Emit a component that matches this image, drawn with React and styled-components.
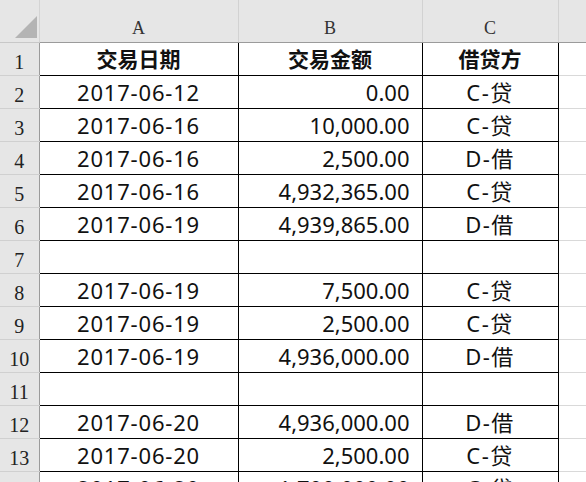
import React from "react";
import styled, { createGlobalStyle } from "styled-components";

const GlobalStyle = createGlobalStyle`
  html, body {
    margin: 0;
    padding: 0;
    background: #ffffff;
    overflow: hidden;
  }
`;

const COLS = ["A", "B", "C"];

const rows = [
  { head: true, a: "交易日期", b: "交易金额", c: "借贷方" },
  { a: "2017-06-12", b: "0.00", c: "C-贷" },
  { a: "2017-06-16", b: "10,000.00", c: "C-贷" },
  { a: "2017-06-16", b: "2,500.00", c: "D-借" },
  { a: "2017-06-16", b: "4,932,365.00", c: "C-贷" },
  { a: "2017-06-19", b: "4,939,865.00", c: "D-借" },
  { a: "", b: "", c: "" },
  { a: "2017-06-19", b: "7,500.00", c: "C-贷" },
  { a: "2017-06-19", b: "2,500.00", c: "C-贷" },
  { a: "2017-06-19", b: "4,936,000.00", c: "D-借" },
  { a: "", b: "", c: "" },
  { a: "2017-06-20", b: "4,936,000.00", c: "D-借" },
  { a: "2017-06-20", b: "2,500.00", c: "C-贷" },
  { a: "2017-06-20", b: "1,700,000.00", c: "C-贷" },
];

const Sheet = styled.table`
  border-collapse: collapse;
  table-layout: fixed;
  width: 660px;
  font-family: "Noto Sans", "Noto Sans CJK SC", sans-serif;
  color: #111;
`;

const HeadRow = styled.tr`
  height: 42px;
  background: #e6e6e6;
`;

const Corner = styled.th`
  padding: 0;
  border-right: 1px solid #d4d4d4;
  border-bottom: 1px solid #c8c8c8;
  vertical-align: bottom;
`;

const CornerBox = styled.div`
  display: flex;
  justify-content: flex-end;
  padding: 0 2px 4px 0;
`;

const Triangle = styled.div`
  width: 0;
  height: 0;
  border-left: 22px solid transparent;
  border-bottom: 22px solid #b4b4b4;
`;

const ColLetter = styled.th`
  padding: 0 0 3px;
  font-family: "Liberation Serif", serif;
  font-weight: normal;
  font-size: 18px;
  color: #333;
  text-align: center;
  vertical-align: bottom;
  border-left: 1px solid #d2d2d2;
  border-right: 1px solid #d2d2d2;
  border-bottom: 1px solid #9b9b9b;
`;

const Row = styled.tr`
  height: 33px;
`;

const RowNum = styled.th`
  padding: 0 0 1px;
  background: #e6e6e6;
  font-family: "Liberation Serif", serif;
  font-weight: normal;
  font-size: 20px;
  color: #222;
  text-align: center;
  vertical-align: bottom;
  border-bottom: 1px solid #d0d0d0;
  border-right: 1px solid #9b9b9b;
`;

const Cell = styled.td`
  padding: 0 ${(p) => (p.$align === "right" ? "12px" : "0")} 0 0;
  border: 1px solid #000;
  text-align: ${(p) => p.$align || "center"};
  font-size: ${(p) => (p.$bold ? "21px" : "22px")};
  font-weight: ${(p) => (p.$bold ? 700 : 400)};
  letter-spacing: ${(p) => (p.$bold ? "0" : p.$spread || "0")};
  font-family: ${(p) =>
    p.$bold ? `"Noto Sans CJK SC", sans-serif` : `"Noto Sans", "Noto Sans CJK SC", sans-serif`};
  white-space: nowrap;
  line-height: 1;
  vertical-align: middle;
`;

const Blank = styled.td`
  border-bottom: 1px solid #d9d9d9;
  border-left: 1px solid #000;
`;

export default function App() {
  return (
    <>
      <GlobalStyle />
      <Sheet>
        <colgroup>
          <col style={{ width: 39 }} />
          <col style={{ width: 199 }} />
          <col style={{ width: 184 }} />
          <col style={{ width: 136 }} />
          <col style={{ width: 102 }} />
        </colgroup>
        <thead>
          <HeadRow>
            <Corner>
              <CornerBox>
                <Triangle />
              </CornerBox>
            </Corner>
            {COLS.map((c) => (
              <ColLetter key={c}>{c}</ColLetter>
            ))}
            <ColLetter />
          </HeadRow>
        </thead>
        <tbody>
          {rows.map((r, i) => (
            <Row key={i}>
              <RowNum>{i + 1}</RowNum>
              <Cell $bold={r.head} $spread="0.8px">
                {r.a}
              </Cell>
              <Cell $bold={r.head} $align={r.head ? "center" : "right"}>
                {r.b}
              </Cell>
              <Cell $bold={r.head} $spread="1.5px">
                {r.c}
              </Cell>
              <Blank />
            </Row>
          ))}
        </tbody>
      </Sheet>
    </>
  );
}
